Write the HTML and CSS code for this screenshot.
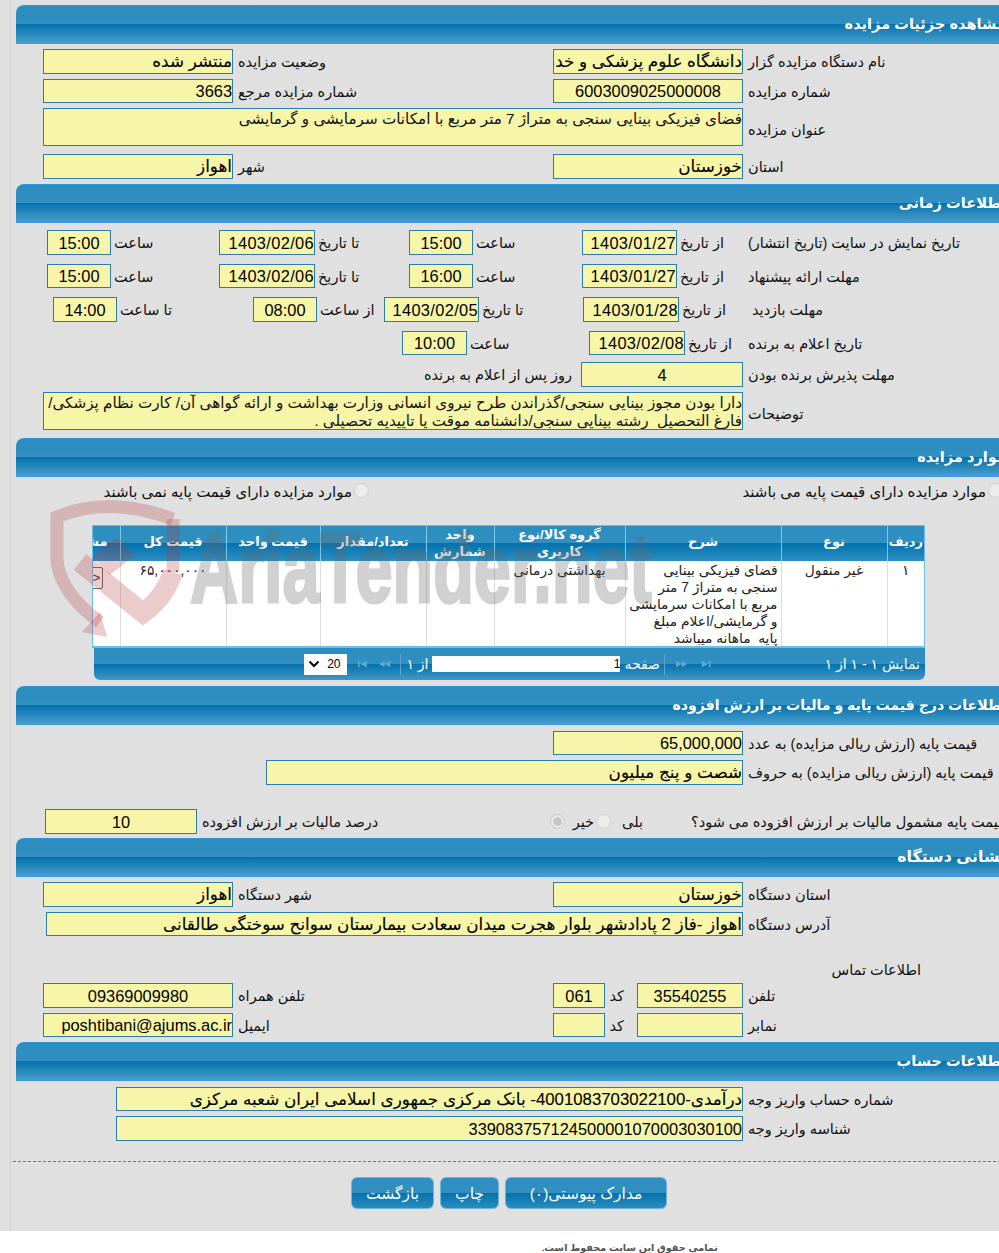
FILE: index.html
```
<!DOCTYPE html>
<html lang="fa">
<head>
<meta charset="utf-8">
<title>مشاهده جزئیات مزایده</title>
<link rel="stylesheet" href="styles.css">
</head>
<body>
<div class="shell">
<main class="page" dir="rtl">

  <h2 class="band">مشاهده جزئیات مزایده</h2>
  <section class="body">
    <div class="row f2 mt5"><span class="lab">نام دستگاه مزایده گزار</span><div class="fld fa">دانشگاه علوم پزشکی و خدمات درمانی اهواز</div><span class="lab">وضعیت مزایده</span><div class="fld fa">منتشر شده</div></div>
    <div class="row s f2 mt5"><span class="lab">شماره مزایده</span><div class="fld ctr">6003009025000008</div><span class="lab">شماره مزایده مرجع</span><div class="fld">3663</div></div>
    <div class="row tall f1 mt5"><span class="lab">عنوان مزایده</span><div class="area">فضای فیزیکی بینایی سنجی به متراژ 7 متر مربع با امکانات سرمایشی و گرمایشی</div></div>
    <div class="row f2 mt8"><span class="lab">استان</span><div class="fld fa">خوزستان</div><span class="lab">شهر</span><div class="fld fa">اهواز</div></div>
  </section>

  <h2 class="band top5">اطلاعات زمانی</h2>
  <section class="body">
    <div class="row t1 mt7"><span class="lab">تاریخ نمایش در سایت (تاریخ انتشار)</span><span class="lab">از تاریخ</span><div class="fld date">1403/01/27</div><span class="lab">ساعت</span><div class="fld ctr">15:00</div><span class="lab">تا تاریخ</span><div class="fld date">1403/02/06</div><span class="lab">ساعت</span><div class="fld ctr">15:00</div></div>
    <div class="row s t1 mt9"><span class="lab">مهلت ارائه پیشنهاد</span><span class="lab">از تاریخ</span><div class="fld date">1403/01/27</div><span class="lab">ساعت</span><div class="fld ctr">16:00</div><span class="lab">تا تاریخ</span><div class="fld date">1403/02/06</div><span class="lab">ساعت</span><div class="fld ctr">15:00</div></div>
    <div class="row t3 mt9"><span class="lab inset">مهلت بازدید</span><span class="lab">از تاریخ</span><div class="fld date">1403/01/28</div><span class="lab">تا تاریخ</span><div class="fld date">1403/02/05</div><span class="lab">از ساعت</span><div class="fld ctr">08:00</div><span class="lab">تا ساعت</span><div class="fld ctr">14:00</div></div>
    <div class="row s t4 mt9"><span class="lab">تاریخ اعلام به برنده</span><span class="lab">از تاریخ</span><div class="fld date">1403/02/08</div><span class="lab">ساعت</span><div class="fld ctr">10:00</div></div>
    <div class="row f5 mt7"><span class="lab">مهلت پذیرش برنده بودن</span><div class="fld ctr">4</div><span class="after">روز پس از اعلام به برنده</span></div>
    <div class="row tall f1 mt5"><span class="lab">توضیحات</span><div class="area">دارا بودن مجوز بینایی سنجی/گذراندن طرح نیروی انسانی وزارت بهداشت و ارائه گواهی آن/ کارت نظام پزشکی/<br>فارغ التحصیل&nbsp; رشته بینایی سنجی/دانشنامه موقت یا تاییدیه تحصیلی .</div></div>
  </section>

  <h2 class="band top8">موارد مزایده</h2>
  <section class="body">
    <div class="radios">
      <label class="opt first"><span class="radio"></span><span>موارد مزایده دارای قیمت پایه می باشند</span></label>
      <label class="opt"><span class="radio"></span><span>موارد مزایده دارای قیمت پایه نمی باشند</span></label>
    </div>
    <div class="grid-wrap">
      <table class="grid">
        <colgroup><col class="c1"><col class="c2"><col class="c3"><col class="c4"><col class="c5"><col class="c6"><col class="c7"><col class="c8"><col class="c9"></colgroup>
        <thead>
          <tr><th>ردیف</th><th>نوع</th><th>شرح</th><th class="two">گروه کالا/نوع کاربری</th><th class="two">واحد شمارش</th><th>تعداد/مقدار</th><th>قیمت واحد</th><th>قیمت کل</th><th>مشاهده</th></tr>
        </thead>
        <tbody>
          <tr>
            <td class="mid">۱</td><td class="mid">غیر منقول</td>
            <td class="desc">فضای فیزیکی بینایی<br>سنجی به متراژ 7 متر<br>مربع با امکانات سرمایشی<br>و گرمایشی/اعلام مبلغ<br>پایه&nbsp; ماهانه میباشد</td>
            <td class="mid">بهداشتی درمانی</td><td></td><td></td><td></td><td class="mid">۶۵,۰۰۰,۰۰۰</td>
            <td><span class="more">&gt;</span></td>
          </tr>
        </tbody>
      </table>
    </div>
    <div class="pager">
      <span class="info">نمایش ۱ - ۱ از ۱</span>
      <svg class="ic ic-e" viewBox="0 0 12 10"><path d="M0 1l8 4-8 4zM9 1h2v8H9z"/></svg>
      <svg class="ic ic-n" viewBox="0 0 15 10"><path d="M0 1l7 4-7 4zM7 1l7 4-7 4z"/></svg>
      <span class="sep"></span>
      <span class="pg-lab">صفحه</span>
      <span class="pg-box">1</span>
      <span class="pg-lab of">از ۱</span>
      <span class="sep"></span>
      <svg class="ic ic-p" viewBox="0 0 15 10"><path d="M14 1L7 5l7 4zM7 1L0 5l7 4z"/></svg>
      <svg class="ic ic-s" viewBox="0 0 12 10"><path d="M12 1L4 5l8 4zM1 1h2v8H1z"/></svg>
      <span class="pg-sel"><span>20</span><svg viewBox="0 0 12 8"><path d="M1.5 1.5L6 6l4.5-4.5" fill="none" stroke="#000" stroke-width="2"/></svg></span>
    </div>
  </section>

  <h2 class="band top6 narrow">اطلاعات درج قیمت پایه و مالیات بر ارزش افزوده</h2>
  <section class="body">
    <div class="row s f1w mt6"><span class="lab">قیمت پایه (ارزش ریالی مزایده) به عدد</span><div class="fld">65,000,000</div></div>
    <div class="row f3 mt5"><span class="lab">قیمت پایه (ارزش ریالی مزایده) به حروف</span><div class="fld fa">شصت و پنج میلیون</div></div>
    <div class="row tax mt24">
      <span class="lab">قیمت پایه مشمول مالیات بر ارزش افزوده می شود؟</span><span></span><span class="yes">بلی</span><span class="radio"></span><span class="no">خیر</span><span class="radio on"></span><span class="lab">درصد مالیات بر ارزش افزوده</span><div class="fld ctr">10</div>
    </div>
  </section>

  <h2 class="band top4 wide">نشانی دستگاه</h2>
  <section class="body">
    <div class="row f2 mt5"><span class="lab">استان دستگاه</span><div class="fld fa">خوزستان</div><span class="lab">شهر دستگاه</span><div class="fld fa">اهواز</div></div>
    <div class="row s f4 mt5"><span class="lab">آدرس دستگاه</span><div class="fld fa">اهواز -فاز 2 پادادشهر بلوار هجرت میدان سعادت بیمارستان سوانح سوختگی طالقانی</div></div>
    <div class="contact">اطلاعات تماس</div>
    <div class="row f6"><span class="lab">تلفن</span><div class="fld ctr">35540255</div><span class="code">کد</span><div class="fld ctr">061</div><span class="lab">تلفن همراه</span><div class="fld ctr">09369009980</div></div>
    <div class="row s f6 mt5"><span class="lab">نمابر</span><div class="fld"></div><span class="code">کد</span><div class="fld"></div><span class="lab">ایمیل</span><div class="fld">poshtibani@ajums.ac.ir</div></div>
  </section>

  <h2 class="band top5">اطلاعات حساب</h2>
  <section class="body">
    <div class="row s f7 mt6"><span class="lab">شماره حساب واریز وجه</span><div class="fld fa">درآمدی-4001083703022100- بانک مرکزی جمهوری اسلامی ایران شعبه مرکزی</div></div>
    <div class="row f7 mt5"><span class="lab">شناسه واریز وجه</span><div class="fld">339083757124500001070003030100</div></div>
  </section>

  <hr class="dash">
  <div class="actions">
    <button class="btn b1" type="button">مدارک پیوستی(۰)</button>
    <button class="btn b2" type="button">چاپ</button>
    <button class="btn b3" type="button">بازگشت</button>
  </div>
</main>

<div class="wm" aria-hidden="true">
  <svg class="wm-logo" viewBox="0 0 140 150">
    <g fill="none" stroke="#b4373c" stroke-opacity=".26">
      <path stroke-width="13" d="M123 22Q58 -2 7 20L7 65Q12 98 50 125"/>
      <path stroke-width="13" d="M123 22L123 75"/>
      <path stroke-width="20" d="M30 65L93 116Q115 100 123 75"/>
    </g>
    <path fill="#b4373c" fill-opacity=".26" d="M50 115L57 140 32 135zM42 60L67 40 85 58 60 78z"/>
  </svg>
  <span class="wm-text">AriaTender.net</span>
</div>
</div>
<footer class="foot">تمامی حقوق این سایت محفوظ است.</footer>
</body>
</html>
```
FILE: styles.css
```
html, body { margin: 0; padding: 0; background: #fff; overflow: hidden; height: 100%; }
body { font-family: "Liberation Sans", "DejaVu Sans", sans-serif; color: #111; font-size: 14.5px; }
* { box-sizing: border-box; }

.shell { position: relative; width: 999px; height: 1231px; overflow: hidden; background: #e0e0e0; padding-left: 10px; }
.page { width: 996px; height: 1231px; padding-top: 5px; border-left: 1px solid #cfcfcf; }

.band {
  margin: 0 0 0 5px; height: 39px; line-height: 36px; color: #fff; font-size: 14.6px; font-weight: bold;
  white-space: nowrap; overflow: hidden; border-radius: 8px 0 0 0;
  border-top: 1px solid #2f95d8; border-bottom: 1px solid #3a9ae0;
  background: linear-gradient(#2b8cbe 0, #3190c1 49%, #0472ad 50%, #4a9ecb 100%);
}
.band.narrow { font-size: 14.1px; }
.band.wide { font-size: 15.8px; }
.top4 { margin-top: 4px; } .top5 { margin-top: 5px; } .top6 { margin-top: 6px; } .top8 { margin-top: 8px; }

.mt5 { margin-top: 5px; } .mt6 { margin-top: 6px; } .mt7 { margin-top: 7px; } .mt8 { margin-top: 8px; } .mt9 { margin-top: 9px; } .mt24 { margin-top: 24px; }

.row { display: grid; height: 25px; align-items: center; white-space: nowrap; }
.row.s { height: 24px; }
.row.tall { height: 38px; }
.f2 { grid-template-columns: 263px 190px 320px 190px; }
.f1 { grid-template-columns: 263px 700px; }
.f1w { grid-template-columns: 263px 190px; }
.f3 { grid-template-columns: 263px 477px; }
.f4 { grid-template-columns: 263px 697px; }
.f5 { grid-template-columns: 263px 162px 1fr; }
.f6 { grid-template-columns: 263px 106px 32px 52px 320px 190px; }
.f7 { grid-template-columns: 263px 627px; }
.t1 { grid-template-columns: 261px 68px 95px 109px 64px 94px 96px 108px 64px; }
.t3 { grid-template-columns: 261px 66px 96px 104px 95px 67px 64px 136px 64px; }
.t4 { grid-template-columns: 261px 60px 96px 122px 65px; }
.tax { grid-template-columns: 320px 43px 32px 15px 31px 15px 353px 152px; }

.lab { text-align: left; padding-left: 5px; padding-top: 1px; }
.t1 .lab, .t3 .lab, .t4 .lab { padding-left: 3px; }
.tall .lab { padding-top: 5px; }
.t3 .inset { padding-left: 7px; }
.after { padding-right: 9px; padding-top: 1px; }
.yes { text-align: right; padding-top: 1px; }
.no { text-align: right; padding-right: 2px; padding-top: 1px; }
.code { padding-right: 13px; padding-top: 1px; }
.contact { margin-top: 23px; height: 24px; line-height: 22px; padding-right: 85px; }

.fld {
  height: 100%; display: flex; align-items: center; justify-content: flex-start; overflow: hidden;
  border: 1px solid #2a7cb0; background: #f7f5a8; color: #000; font-size: 16.4px; white-space: nowrap; padding-top: 1px;
}
.fld.ctr { justify-content: center; }
.fld.date { letter-spacing: .35px; }
.fld.fa { font-size: 16.8px; -webkit-text-stroke: .12px #000; padding-top: 0; }
.area {
  height: 100%; overflow: hidden; border: 1px solid #2a7cb0; background: #f7f5a8; color: #111;
  font-size: 15.2px; line-height: 18px; white-space: nowrap; padding: 1px 0 0;
}

.radios { display: grid; grid-template-columns: 637px 1fr; height: 48px; padding-top: 6px; }
.opt { display: flex; gap: 2px; align-items: flex-start; white-space: nowrap; line-height: 18px; font-size: 15px; }
.opt.first { padding-right: 3px; }
.radio { display: block; width: 15px; height: 15px; border-radius: 50%; border: 1px solid #cfcfcf; background: #ececec; flex: none; }
.radio.on { background: #c6c6c6; box-shadow: inset 0 0 0 2px #ececec; }

.grid-wrap { width: 833px; margin-right: 81px; height: 123px; overflow: hidden; border: 1px solid #6fbde6; border-bottom: 2px solid #6fbde6; background: #fff; }
.grid { border-collapse: collapse; table-layout: fixed; width: 860px; }
.c1 { width: 37px; } .c2 { width: 106px; } .c3 { width: 156px; } .c4 { width: 131px; } .c5 { width: 68px; }
.c6 { width: 106px; } .c7 { width: 94px; } .c8 { width: 106px; } .c9 { width: 56px; }
.grid th {
  height: 35px; padding: 0 2px 4px; color: #fff; font-size: 13px; font-weight: bold; line-height: 17px;
  border-left: 1px solid #7cc8ee; overflow: hidden; white-space: normal;
  background: linear-gradient(#2b8cbe 0, #3190c1 49%, #0472ad 50%, #2b8fc2 100%);
}
.grid th.two { padding-bottom: 1px; }
.grid th:last-child { white-space: nowrap; text-align: right; padding-right: 12px; }
.grid td { height: 86px; vertical-align: top; padding: 1px 3px 0; border-left: 1px solid #ddd; font-size: 13.8px; line-height: 17px; color: #222; overflow: hidden; }
.grid td.mid { text-align: center; white-space: nowrap; }
.grid td.desc { white-space: nowrap; text-align: right; }
.more { display: block; direction: ltr; width: 12px; height: 22px; margin: 5px 14px 0 0; border: 1px solid #666; border-radius: 2px; text-align: center; line-height: 20px; font-size: 13px; }

.pager {
  width: 831px; margin-right: 81px; height: 32px; display: flex; align-items: center;
  color: #fff; font-size: 14px; white-space: nowrap; border-radius: 0 0 6px 6px;
  background: linear-gradient(#2b8cbe 0, #3190c1 49%, #0472ad 50%, #3f98c6 100%);
}
.info { width: 213px; padding-right: 5px; }
.ic { fill: #5fa9cf; height: 8px; flex: none; }
.ic-e { width: 11px; }
.ic-n { width: 14px; margin-right: 12px; }
.sep { width: 1px; height: 21px; background: #5fa5cb; flex: none; }
.ic-n + .sep { margin-right: 10px; }
.pg-lab { margin-right: 4px; }
.pg-box { width: 188px; height: 16px; margin-right: 4px; background: #fff; color: #000; line-height: 16px; font-size: 12px; }
.pg-lab.of { margin-right: 4px; width: 24px; }
.of + .sep { margin-right: 3px; }
.ic-p { width: 14px; margin-right: 8px; }
.ic-s { width: 12px; margin-right: 10px; }
.pg-sel { width: 43px; height: 21px; margin-right: 9px; background: #fff; color: #000; display: flex; align-items: center; justify-content: space-between; padding: 0 7px 0 4px; font-size: 12px; }
.pg-sel svg { width: 12px; height: 8px; }

.dash { margin: 20px 0 0 2px; border: 0; border-top: 1px dashed #3a85b5; height: 0; }
.actions { display: flex; gap: 6px; padding-right: 339px; margin-top: 15px; }
.btn {
  height: 32px; border: 1px solid #6db7dc; border-radius: 6px; color: #fff; font: 15.5px "Liberation Sans", "DejaVu Sans", sans-serif; padding: 1px 0 0;
  background: linear-gradient(#2e8fc0 0, #3190c1 49%, #0472ad 50%, #2b8cbe 100%);
}
.b1 { width: 162px; } .b2 { width: 59px; } .b3 { width: 83px; }

.wm { position: absolute; left: 0; top: 0; width: 0; height: 0; pointer-events: none; }
.wm-logo { position: absolute; left: 50px; top: 497px; width: 140px; height: 150px; overflow: visible; }
.wm-text { position: absolute; left: 190px; top: 519px; font: bold 98px/1 "Liberation Sans", sans-serif; color: #696969; -webkit-text-stroke: 3px #696969; opacity: .3; white-space: nowrap; transform: scaleX(.68); transform-origin: 0 0; direction: ltr; }

.foot { height: 22px; padding-right: 281px; direction: rtl; font-size: 9.7px; line-height: 34px; color: #555; background: #fff; font-weight: bold; }
```
